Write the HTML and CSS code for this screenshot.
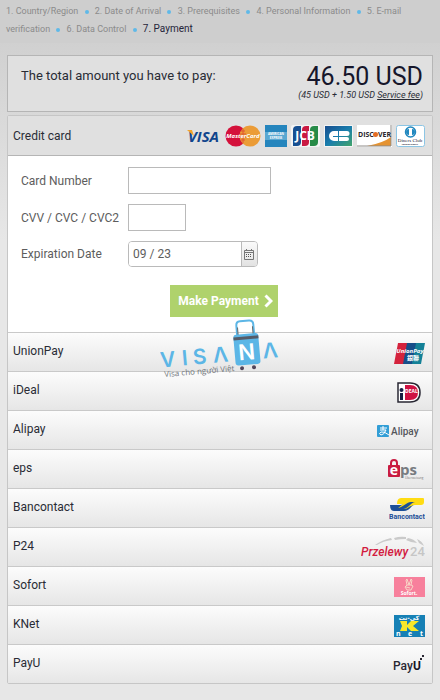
FILE: index.html
```html
<!DOCTYPE html>
<html lang="en">
<head>
    <meta charset="UTF-8">
    <meta name="viewport" content="width=device-width, initial-scale=1.0">
    <title>Payment</title>
    <link rel="stylesheet" href="styles.css">
</head>
<body>

    <nav class="steps" aria-label="Steps">
        1. Country/Region <i class="dot"></i>
        2. Date of Arrival <i class="dot"></i>
        3. Prerequisites <i class="dot"></i>
        4. Personal Information <i class="dot"></i>
        5. E-mail verification <i class="dot"></i>
        6. Data Control <i class="dot"></i>
        <span class="current">7. Payment</span>
    </nav>

    <main class="container">
        <section class="total">
            <h1>The total amount you have to pay:</h1>
            <div class="sum">
                <strong>46.50 USD</strong>
                <em>(45 USD + 1.50 USD <a href="#">Service fee</a>)</em>
            </div>
        </section>

        <div class="methods">
            <!-- Credit card -->
            <button class="method active" type="button">
                <span>Credit card</span>
                <span class="cards">
                    <svg width="34" height="22" viewBox="0 0 34 22">
                        <text x="1" y="17" class="logo heavy" font-size="15" fill="#10458c" font-style="italic">VISA</text>
                        <path d="M0 5h5l2 6z" fill="#f0a32c"/>
                    </svg>
                    <svg width="36" height="22" viewBox="0 0 36 22">
                        <circle cx="11" cy="11" r="10.500" fill="#d4113b"/>
                        <circle cx="25" cy="11" r="10.500" fill="#eb9c37"/>
                        <path d="M18 4v14M16 6h4M15 9h6M15 12h6M16 15h4" stroke="#df5532"/>
                        <text x="18" y="13" class="logo heavy" font-size="6" fill="#fff" font-style="italic" text-anchor="middle">MasterCard</text>
                    </svg>
                    <svg width="22" height="22" viewBox="0 0 22 22">
                        <path d="M0 0h22v22H0z" fill="#2585bd"/>
                        <path d="M0 7h22v8H0z" fill="#5aa8d2"/>
                        <text x="11" y="10" class="logo heavy" font-size="3" fill="#fff" text-anchor="middle">AMERICAN</text>
                        <text x="11" y="14" class="logo heavy" font-size="3" fill="#fff" text-anchor="middle">EXPRESS</text>
                    </svg>
                    <svg width="29" height="22" viewBox="0 0 29 22">
                        <rect width="29" height="22" rx="2" fill="#f4f4f4"/>
                        <path d="M2 5q0-4 4-4h4v16q0 4-4 4H2z" fill="#164f91"/>
                        <path d="M11 5q0-4 4-4h3v16q0 4-4 4h-3z" fill="#c91942"/>
                        <path d="M19 5q0-4 4-4h4v16q0 4-4 4h-4z" fill="#278b48"/>
                        <text x="14" y="15" class="logo heavy" font-size="12" fill="#fff" text-anchor="middle">JCB</text>
                    </svg>
                    <svg width="29" height="22" viewBox="0 0 29 22">
                        <defs>
                            <linearGradient id="cb" x2="1" y2="1"><stop stop-color="#174d8e"/><stop offset=".5" stop-color="#197dad"/><stop offset="1" stop-color="#43a46a"/></linearGradient>
                        </defs>
                        <rect width="29" height="22" rx="1" fill="#f4f4f4"/>
                        <path d="M1 1h27v20H1z" fill="url(#cb)"/>
                        <path d="M14 6h-4a5 5 0 0 0 0 10h4v-4H9v-1h5zM15 6h8a2.500 2.500 0 0 1 0 5h-8zM15 12h8a2 2 0 0 1 0 4h-8z" fill="#fff"/>
                    </svg>
                    <svg width="35" height="22" viewBox="0 0 35 22">
                        <path d="M0 0h35v22H0z" fill="#fff"/>
                        <path d="M34 12v9H10q16-3 24-9z" fill="#e59331"/>
                        <path d="M34 0v21H0" fill="none" stroke="#8e8b88"/>
                        <text x="1" y="12" class="logo heavy" font-size="7" fill="#29252b">DISC</text>
                        <circle cx="18.500" cy="9.500" r="2.500" fill="#e46c23"/>
                        <text x="21" y="12" class="logo heavy" font-size="7" fill="#29252b">VER</text>
                    </svg>
                    <svg width="29" height="22" viewBox="0 0 29 22">
                        <rect x=".5" y=".5" width="28" height="21" rx="2" fill="#fff" stroke="#8cc5e4"/>
                        <circle cx="14.500" cy="7" r="5" fill="#fff" stroke="#2188bf" stroke-width="1.500"/>
                        <path d="M13 4a3 3 0 0 0 0 6zM16 4a3 3 0 0 1 0 6z" fill="#2188bf"/>
                        <text x="14" y="17" class="serif" font-size="5" fill="#223" text-anchor="middle">Diners Club</text>
                        <text x="14" y="20" class="logo heavy" font-size="2" fill="#223" text-anchor="middle">INTERNATIONAL</text>
                    </svg>
                </span>
            </button>

            <form class="card-form">
                <label for="cardNumber">Card Number</label>
                <input type="text" id="cardNumber" class="number">
                <label for="cvv">CVV / CVC / CVC2</label>
                <input type="text" id="cvv" class="cvv">
                <label for="expiration">Expiration Date</label>
                <div class="date">
                    <input type="text" id="expiration" value="09 / 23">
                    <button type="button" aria-label="Choose date">
                        <svg width="10" height="11" viewBox="0 0 10 11">
                            <path d="M.5 1.500h9v9h-9zM2.500 0v2M7.500 0v2M0 3.500h10" fill="none" stroke="#777"/>
                            <path d="M2 5.500h6M2 7.500h6" stroke="#555" stroke-dasharray="1 1" fill="none"/>
                        </svg>
                    </button>
                </div>
                <button type="submit" class="pay">
                    Make Payment
                    <svg width="9" height="14" viewBox="0 0 9 14"><path d="M1.500 1.500L7 7l-5.500 5.500" fill="none" stroke="#fff" stroke-width="3"/></svg>
                </button>
            </form>

            <!-- Watermark -->
            <svg class="watermark" width="124" height="62" viewBox="0 0 124 62">
                <g transform="rotate(-5 62 38)" fill="#5cb6e6">
                    <g class="brand" font-size="21">
                        <text x="0" y="43">V</text>
                        <text x="22" y="43">I</text>
                        <text x="33" y="43">S</text>
                        <text x="53" y="43">Λ</text>
                        <text x="103" y="43">Λ</text>
                    </g>
                    <path d="M79 18V8q0-4 4-4h9q4 0 4 4v10" fill="none" stroke="#5cb6e6" stroke-width="2"/>
                    <path d="M80 10v9M95 10v9" stroke="#666" fill="none"/>
                    <rect x="75" y="17" width="25" height="31" rx="3"/>
                    <path d="M75 21h25" stroke="#555b68" stroke-width="3"/>
                    <text x="87" y="43" class="brand" font-size="22" fill="#fff" text-anchor="middle">N</text>
                    <circle cx="81" cy="51" r="2" fill="#50455a"/>
                    <circle cx="93" cy="51" r="2" fill="#50455a"/>
                    <text x="3" y="53" class="logo" font-size="8" fill="#71757a">Visa cho người Việt</text>
                </g>
            </svg>

            <button class="method" type="button">
                <span>UnionPay</span>
                <svg width="31" height="21" viewBox="0 0 31 21">
                    <path d="M4 0h10l-4 21H0z" fill="#d4223c"/>
                    <path d="M13 0h10l-4 21H9z" fill="#164e89"/>
                    <path d="M22 0h9l-4 21h-9z" fill="#148197"/>
                    <text x="16" y="10" class="logo heavy" font-size="6" font-style="italic" fill="#fff" text-anchor="middle">UnionPay</text>
                    <text x="19" y="17" class="cjk" font-size="6" fill="#fff" text-anchor="middle">銀聯</text>
                </svg>
            </button>
            <button class="method" type="button">
                <span>iDeal</span>
                <svg class="inset" width="24" height="21" viewBox="0 0 24 21">
                    <path d="M1 1h12q10 0 10 9.500T13 20H1z" fill="#fff" stroke="#292733" stroke-width="1.500"/>
                    <path d="M8 3h5q8 0 8 7.500T13 18H8z" fill="#cf1143"/>
                    <circle cx="4.500" cy="8" r="2" fill="#171d43"/>
                    <path d="M3 11h3v7H3z" fill="#171d43"/>
                    <text x="8" y="11" class="logo heavy" font-size="5" fill="#fff">DEAL</text>
                </svg>
            </button>
            <button class="method" type="button">
                <span>Alipay</span>
                <svg width="48" height="20" viewBox="0 0 48 20">
                    <rect x="0" y="4" width="12" height="12" rx="1" fill="#329ed6"/>
                    <path d="M3 7h7M6 5v4M3 9h6q-2 5-5 5-3-1 0-3 3-1 8 3" fill="none" stroke="#fff"/>
                    <text x="14" y="14" class="roboto" font-size="10" fill="#54565b">Alipay</text>
                </svg>
            </button>
            <button class="method" type="button">
                <span>eps</span>
                <svg width="38" height="22" viewBox="0 0 38 22">
                    <path d="M4 7V4q0-3 3-3t3 3v3" fill="none" stroke="#c91b41" stroke-width="2"/>
                    <rect x="1" y="6" width="12" height="12" rx="1" fill="#c91b41"/>
                    <text x="7" y="16" class="logo heavy" font-size="14" fill="#fff" text-anchor="middle">e</text>
                    <text x="13" y="16" class="logo heavy" font-size="15" fill="#777b80">ps</text>
                    <text x="18" y="20" class="logo" font-size="3" fill="#777">Überweisung</text>
                </svg>
            </button>
            <button class="method" type="button">
                <span>Bancontact</span>
                <svg width="36" height="24" viewBox="0 0 36 24">
                    <path d="M1 8h10c5 0 8-5 11-5h5v4c-5 1-6 7-12 7H5q-4 0-4-6z" fill="#1c4f98"/>
                    <path d="M12 1h22q1 0 1 1v3q0 3-3 3h-6c-5 0-7 4-11 4H8l6-5H8q0-6 4-6z" fill="#ffdc13"/>
                    <path d="M8 11c6 0 9-6 14-6h4c-5 1-7 7-12 7H8z" fill="#1c4f98"/>
                    <text x="18" y="22" class="roboto heavy" font-size="7" fill="#1c4f98" text-anchor="middle">Bancontact</text>
                </svg>
            </button>
            <button class="method" type="button">
                <span>P24</span>
                <svg width="64" height="24" viewBox="0 0 64 24">
                    <path d="M14 9q7-5 16-7l1 2q-9 1-15 5zM33 2q6-2 12-1v2q-6 0-11 1zM47 2q6 1 9 5l-6-1-5-2zM56 3q5 2 7 7l-5-3z" fill="#cacaca"/>
                    <text x="0" y="20" class="roboto" font-size="12" font-style="italic" fill="#d21b40">Przelewy</text>
                    <text x="49" y="20" class="roboto" font-size="13" fill="#c6c6c6">24</text>
                </svg>
            </button>
            <button class="method" type="button">
                <span>Sofort</span>
                <svg width="31" height="20" viewBox="0 0 31 20">
                    <path d="M0 0h31v20H0z" fill="#f7809c"/>
                    <path d="M13 2l2 6 2-6 1 1-1 5 2 1-2 4h-4l-2-3 2-2-1-5zM13 8h4M12 10l4 1" fill="none" stroke="#f8d7c7"/>
                    <text x="15" y="18" class="logo heavy" font-size="5" fill="#fff" text-anchor="middle">Sofort.</text>
                </svg>
            </button>
            <button class="method" type="button">
                <span>KNet</span>
                <svg width="31" height="22" viewBox="0 0 31 22">
                    <path d="M0 0h31v22H0z" fill="#1680b5"/>
                    <text x="15" y="5" class="arabic" font-size="6" fill="#fff" text-anchor="middle">كي-نت</text>
                    <path d="M6 6h7v4l4-4h8l-6 5 6 5h-8l-4-4v4H6l2-5z" fill="#f8e72a"/>
                    <text x="2" y="21" class="logo heavy" font-size="7" fill="#fff">n</text>
                    <text x="14" y="21" class="logo heavy" font-size="7" fill="#fff">e</text>
                    <text x="26" y="21" class="logo heavy" font-size="7" fill="#fff">t</text>
                </svg>
            </button>
            <button class="method" type="button">
                <span>PayU</span>
                <svg width="32" height="20" viewBox="0 0 32 20">
                    <text x="0" y="15" class="roboto" font-size="12" fill="#292733">Pay</text>
                    <text x="20" y="15" class="roboto heavy" font-size="12" fill="#171426">U</text>
                    <path d="M27 3h2v2h-2zM29 0h2v2h-2z" fill="#292733"/>
                </svg>
            </button>
        </div>
    </main>

</body>
</html>
```
FILE: styles.css
```css
* {
    box-sizing: border-box;
}
body {
    font-family: Roboto, "Open Sans", sans-serif;
    font-size: 12px;
    margin: 0;
    min-height: 100vh;
    color: #292c35;
    background: linear-gradient(#d0d0d0 40px, #e7e7e7 240px);
}
button, input {
    font: inherit;
    color: inherit;
}
.steps {
    padding: 2px 30px 5px 6px;
    font-size: 9px;
    line-height: 18px;
    color: #8b8b8b;
    background: #cecece;
}
.steps .current {
    font-size: 10px;
    color: #25253a;
}
.dot {
    display: inline-block;
    width: 4px;
    height: 4px;
    margin: 0 4px;
    border-radius: 50%;
    background: #5fb9e8;
    vertical-align: middle;
}
.container {
    padding: 12px 7px 16px;
}
.total {
    display: flex;
    justify-content: space-between;
    height: 57px;
    padding: 10px 9px 0 13px;
    border: 1px solid #b5b5b5;
    background: #e0e0e0;
}
.total h1 {
    margin: 0;
    font-size: 13px;
    font-weight: normal;
    line-height: 20px;
}
.sum {
    text-align: right;
}
.sum strong {
    display: block;
    font-size: 25px;
    font-weight: normal;
    line-height: 22px;
    color: #16162b;
}
.sum em {
    font-size: 9px;
    line-height: 14px;
    display: block;
}
.sum a {
    color: inherit;
}
.methods {
    position: relative;
    margin-top: 3px;
    border: 1px solid #c6c6c6;
    border-radius: 2px;
    background: #fff;
}
.method {
    display: flex;
    justify-content: space-between;
    align-items: center;
    width: 100%;
    height: 39px;
    padding: 0 7px 2px 5px;
    border: 0;
    border-top: 1px solid #c9c9c9;
    background: linear-gradient(#fcfcfc, #e6e6e6);
    text-align: left;
    cursor: pointer;
}
.method > svg {
    margin-top: 4px;
}
.method .inset {
    margin-right: 4px;
}
.method.active {
    height: 40px;
    padding-bottom: 0;
    border-top: 0;
    border-bottom: 1px solid #b5b5b5;
    background: #e0e0e0;
}
.cards {
    display: flex;
    gap: 4px;
}
.card-form {
    display: grid;
    grid-template-columns: 107px 1fr;
    align-items: center;
    row-gap: 10px;
    padding: 11px 13px 15px;
    color: #5d5d5d;
}
.card-form input {
    height: 27px;
    padding: 0 4px;
    border: 1px solid #bababa;
    background: #fff;
}
.card-form .number {
    width: 143px;
}
.card-form .cvv {
    width: 58px;
}
.date {
    display: flex;
    width: 130px;
    height: 26px;
    border: 1px solid #bababa;
    border-radius: 4px;
    overflow: hidden;
}
.card-form .date input {
    flex: 1;
    min-width: 0;
    height: 24px;
    border: 0;
}
.date button {
    width: 16px;
    padding: 2px;
    border: 0;
    border-left: 1px solid #bababa;
    background: linear-gradient(#fafafa, #e2e2e2);
}
.pay {
    display: flex;
    grid-column: 1 / -1;
    justify-self: center;
    align-items: center;
    gap: 5px;
    height: 32px;
    margin: 8px 0 0 8px;
    padding: 0 5px 0 8px;
    border: 0;
    background: #afd26c;
    color: #fff;
    font-weight: bold;
}
.watermark {
    position: absolute;
    top: 203px;
    left: 152px;
    pointer-events: none;
}
svg {
    display: block;
    flex: none;
}
.logo {
    font-family: "Open Sans", sans-serif;
}
.roboto {
    font-family: Roboto, sans-serif;
    font-weight: 500;
}
.heavy {
    font-weight: bold;
}
.brand {
    font-family: Inter, sans-serif;
    font-weight: 600;
}
.serif {
    font-family: "Liberation Serif", serif;
}
.arabic {
    font-family: "DejaVu Sans", sans-serif;
    font-weight: bold;
}
.cjk {
    font-family: "Noto Sans CJK TC", sans-serif;
    font-weight: bold;
}
```
